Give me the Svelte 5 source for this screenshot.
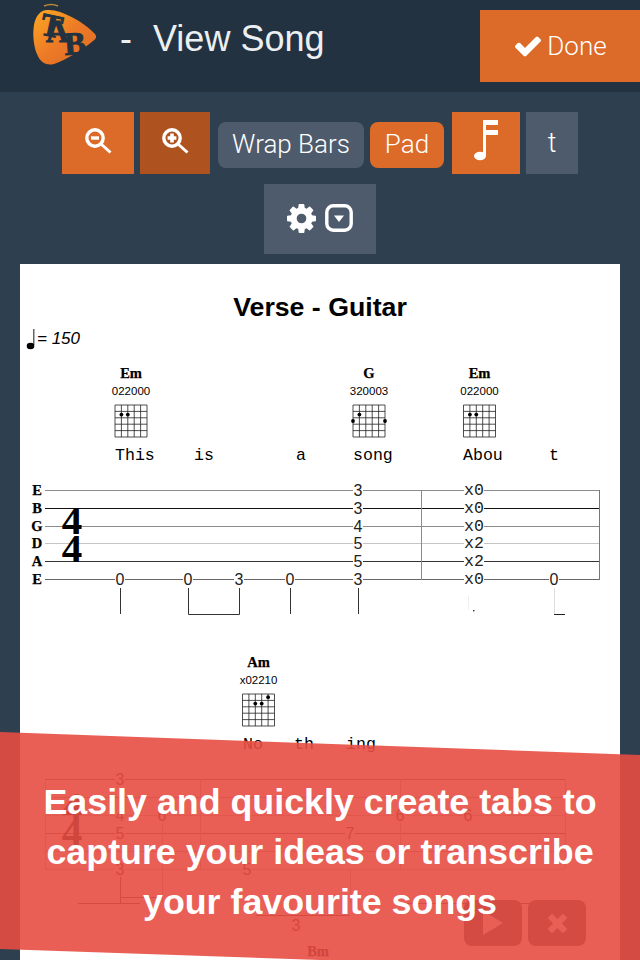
<script>
  const strings = [
    { name: 'E', y: 490, color: '#8c8c8c' },
    { name: 'B', y: 508, color: '#111' },
    { name: 'G', y: 526, color: '#8c8c8c' },
    { name: 'D', y: 543, color: '#c4c4c4' },
    { name: 'A', y: 561, color: '#333' },
    { name: 'E', y: 579, color: '#666' }
  ];

  // fret numbers, bar one then bar two
  const frets = [
    { x: 120, s: 5, t: '0' },
    { x: 188, s: 5, t: '0' },
    { x: 239, s: 5, t: '3' },
    { x: 290, s: 5, t: '0' },
    { x: 358, s: 0, t: '3' },
    { x: 358, s: 1, t: '3' },
    { x: 358, s: 2, t: '4' },
    { x: 358, s: 3, t: '5' },
    { x: 358, s: 4, t: '5' },
    { x: 358, s: 5, t: '3' },
    { x: 554, s: 5, t: '0' }
  ];
  const ghosts = [
    { s: 0, t: 'x0' },
    { s: 1, t: 'x0' },
    { s: 2, t: 'x0' },
    { s: 3, t: 'x2' },
    { s: 4, t: 'x2' },
    { s: 5, t: 'x0' }
  ];

  const chords = [
    { name: 'Em', code: '022000', x: 115, y: 405 },
    { name: 'G', code: '320003', x: 353, y: 405 },
    { name: 'Em', code: '022000', x: 463.5, y: 405 },
    { name: 'Am', code: 'x02210', x: 242.5, y: 694 }
  ];

  const lyrics = [
    { x: 115, y: 460, t: 'This' },
    { x: 194, y: 460, t: 'is' },
    { x: 296, y: 460, t: 'a' },
    { x: 353, y: 460, t: 'song' },
    { x: 463, y: 460, t: 'Abou' },
    { x: 549, y: 460, t: 't' },
    { x: 243, y: 749, t: 'No' },
    { x: 294, y: 749, t: 'th' },
    { x: 346, y: 749, t: 'ing' }
  ];

  const lower = [
    { y: 779, color: '#555' },
    { y: 797, color: '#999' },
    { y: 815, color: '#bbb' },
    { y: 833, color: '#555' },
    { y: 851, color: '#999' },
    { y: 869, color: '#bbb' }
  ];
  const lowerFrets = [
    { x: 120, y: 779, t: '3' },
    { x: 120, y: 815, t: '4' },
    { x: 120, y: 833, t: '5' },
    { x: 120, y: 869, t: '3' },
    { x: 162, y: 815, t: '6' },
    { x: 247, y: 869, t: '5' },
    { x: 350, y: 833, t: '7' },
    { x: 400, y: 815, t: '6' },
    { x: 468, y: 815, t: '6' },
    { x: 296, y: 925, t: '3' }
  ];

  function dots(code) {
    const out = [];
    code.split('').forEach((c, i) => {
      const f = Number(c);
      if (f > 0) out.push({ i, f });
    });
    return out;
  }
</script>

{#snippet diagram(c)}
  <text class="chord-name" x={c.x + 16} y={c.y - 27}>{c.name}</text>
  <text class="chord-code" x={c.x + 16} y={c.y - 10}>{c.code}</text>
  {#each [0, 1, 2, 3, 4, 5] as i}
    <line x1={c.x + i * 6.4} x2={c.x + i * 6.4} y1={c.y} y2={c.y + 32} stroke="#222" stroke-width="0.8" />
    <line x1={c.x} x2={c.x + 32} y1={c.y + i * 6.4} y2={c.y + i * 6.4} stroke="#222" stroke-width="0.8" />
  {/each}
  {#each dots(c.code) as d}
    <circle cx={c.x + d.i * 6.4} cy={c.y + (d.f - 0.5) * 6.4} r="1.9" fill="#000" />
  {/each}
{/snippet}

<div class="screen">
  <header class="topbar">
    <svg class="logo" viewBox="30 0 70 70" width="70" height="70">
      <defs>
        <linearGradient id="pick" x1="0" y1="0" x2="1" y2="1">
          <stop offset="0" stop-color="#fca922" />
          <stop offset="0.5" stop-color="#ec7a26" />
          <stop offset="1" stop-color="#dc6a28" />
        </linearGradient>
      </defs>
      <path d="M44 6 Q51 3 58 6" fill="none" stroke="#b98a35" stroke-width="1.5" />
      <path d="M48 10 C60 9 84 22 94 33 C97 36 97 38 93 41 C82 50 66 60 54 64 C46 66 40 62 37 54 C32 42 32 22 38 15 C41 11 44 10 48 10 Z" fill="url(#pick)" />
      <g class="logo-letters">
        <text transform="translate(39 34) rotate(12)">T</text>
        <text transform="translate(46 42)">A</text>
        <text transform="translate(65 55) rotate(-4)">B</text>
      </g>
    </svg>
    <h1 class="title"><span class="dash">-</span>View Song</h1>
    <button class="done">
      <svg viewBox="0 0 1792 1792" width="30" height="30"><path fill="#fff" d="M1671 566q0 40-28 68l-724 724-136 136q-28 28-68 28t-68-28l-136-136-362-362q-28-28-28-68t28-68l136-136q28-28 68-28t68 28l294 295 656-657q28-28 68-28t68 28l136 136q28 28 28 68z" /></svg>
      Done
    </button>
  </header>

  <div class="toolbar">
    <button class="tool orange zoom-out" aria-label="Zoom out">
      <svg class="lens" viewBox="0 0 27 26" width="27" height="26">
        <circle cx="10" cy="10" r="8.2" fill="none" stroke="#fff" stroke-width="3.4" />
        <path d="M16 16 L25.5 24.5" stroke="#fff" stroke-width="3" />
        <rect x="6" y="8.3" width="8" height="3.4" fill="#fff" />
      </svg>
    </button>
    <button class="tool dark-orange zoom-in" aria-label="Zoom in">
      <svg class="lens" viewBox="0 0 27 26" width="27" height="26">
        <circle cx="10" cy="10" r="8.2" fill="none" stroke="#fff" stroke-width="3.4" />
        <path d="M16 16 L25.5 24.5" stroke="#fff" stroke-width="3" />
        <path d="M5.6 10 H14.4 M10 5.6 V14.4" stroke="#fff" stroke-width="3.6" />
      </svg>
    </button>
    <div class="pills">
      <button class="pill slate">Wrap Bars</button>
      <button class="pill orange">Pad</button>
    </div>
    <button class="tool orange note" aria-label="Notes">
      <svg viewBox="0 0 30 48" width="30" height="48">
        <ellipse cx="9" cy="37" rx="6" ry="4.2" fill="#fff" />
        <rect x="12" y="1" width="3" height="36" fill="#fff" />
        <rect x="12" y="1" width="15" height="5" fill="#fff" />
        <rect x="12" y="11" width="15" height="5" fill="#fff" />
      </svg>
    </button>
    <button class="tool slate letter">t</button>
    <button class="tool slate settings" aria-label="Settings">
      <svg viewBox="128 128 1536 1536" width="29" height="29"><path fill="#fff" d="M1152 896q0-106-75-181t-181-75-181 75-75 181 75 181 181 75 181-75 75-181zm512-109v222q0 12-8 23t-20 13l-185 28q-19 54-39 91 35 50 107 138 10 12 10 25t-9 23q-27 37-99 108t-94 71q-12 0-26-9l-138-108q-44 23-91 38-16 136-29 186-7 28-36 28h-222q-14 0-24.5-8.5t-11.5-21.5l-28-184q-49-16-90-37l-141 107q-10 9-25 9-14 0-25-11-126-114-165-168-7-10-7-23 0-12 8-23 15-21 51-66.5t54-70.5q-27-50-41-99l-183-27q-13-2-21-12.5t-8-23.5v-222q0-12 8-23t19-13l186-28q14-46 39-92-40-57-107-138-10-12-10-24 0-10 9-23 26-36 98.5-107.5t94.5-71.5q13 0 26 10l138 107q44-23 91-38 16-136 29-186 7-28 36-28h222q14 0 24.5 8.5t11.5 21.5l28 184q49 16 90 37l142-107q9-9 24-9 13 0 25 10 129 119 165 170 7 8 7 22 0 12-8 23-15 21-51 66.5t-54 70.5q26 50 41 98l183 28q13 2 21 12.5t8 23.5z" /></svg>
      <svg viewBox="0 0 28 28" width="28" height="28">
        <rect x="1.8" y="1.8" width="24.4" height="24.4" rx="6.5" fill="none" stroke="#fff" stroke-width="3.4" />
        <path d="M9 11.5 H19 L14 18 Z" fill="#fff" />
      </svg>
    </button>
  </div>

  <main class="sheet">
    <h2 class="song-title">Verse - Guitar</h2>
    <div class="tempo">
      <svg viewBox="0 0 12 22" width="12" height="22">
        <ellipse cx="5.5" cy="18" rx="3.8" ry="3.2" fill="#000" />
        <rect x="8.4" y="1" width="0.9" height="16" fill="#000" />
      </svg>
      <span>= 150</span>
    </div>

    <svg class="score" viewBox="20 350 600 610" width="600" height="610">
      {#each chords as c}
        {@render diagram(c)}
      {/each}

      {#each lyrics as l}
        <text class="lyric" x={l.x} y={l.y}>{l.t}</text>
      {/each}

      <!-- first system -->
      {#each strings as s}
        <text class="string-name" x="37" y={s.y + 4.5}>{s.name}</text>
        <line x1="45" x2="600" y1={s.y + 0.5} y2={s.y + 0.5} stroke={s.color} />
      {/each}
      <line x1="421.5" x2="421.5" y1="490" y2="580" stroke="#8c8c8c" />
      <line x1="599.5" x2="599.5" y1="490" y2="580" stroke="#777" />
      <text class="time-sig" x="72" y="534">4</text>
      <text class="time-sig" x="72" y="562">4</text>

      {#each frets as f}
        <rect x={f.x - 5} y={strings[f.s].y - 7} width="10" height="15" fill="#fff" />
        <text class="fret" x={f.x} y={strings[f.s].y + 6}>{f.t}</text>
      {/each}
      {#each ghosts as g}
        <rect x="464" y={strings[g.s].y - 7} width="20" height="15" fill="#fff" />
        <text class="fret mono" x="474" y={strings[g.s].y + 5}>{g.t}</text>
      {/each}

      <path class="stem" d="M120.5 588V614 M188.5 588V614.5H239.5V588 M290.5 588V614 M358.5 588V614" />
      <path d="M468.5 596V610" stroke="#eee" fill="none" />
      <rect x="473" y="610" width="1.4" height="1.4" fill="#333" />
      <path d="M554.5 588V614" stroke="#ddd" fill="none" />
      <path d="M554 614.5H565" stroke="#222" fill="none" />

      <!-- second system, mostly hidden by the banner -->
      {#each lower as l}
        <line x1="45" x2="565" y1={l.y + 0.5} y2={l.y + 0.5} stroke={l.color} />
      {/each}
      <path class="stem faint" d="M45.5 779V869 M200.5 779V869 M400.5 779V869 M565.5 779V869 M162.5 823V903 M350.5 869V903" />
      <path class="stem" d="M120.5 877V903 M78 903.5H140 M120 897.5H162 M256 915.5H350 M400 903.5H533" />
      <text class="time-sig" x="72" y="820">4</text>
      <text class="time-sig" x="72" y="845">4</text>
      {#each lowerFrets as f}
        <rect x={f.x - 5} y={f.y - 8} width="10" height="16" fill="#fff" />
        <text class="fret" x={f.x} y={f.y + 6}>{f.t}</text>
      {/each}
      <text class="chord-name" x="318" y="956">Bm</text>
    </svg>

    <div class="player">
      <button class="round" aria-label="Play">
        <svg viewBox="0 0 20 24" width="20" height="24"><path d="M0 0 L20 12 L0 24 Z" fill="#fff" /></svg>
      </button>
      <button class="round" aria-label="Stop">
        <svg viewBox="0 0 24 24" width="23" height="23"><path d="M4 4 L20 20 M20 4 L4 20" stroke="#fff" stroke-width="6.5" /></svg>
      </button>
    </div>
  </main>

  <aside class="banner">
    <p>Easily and quickly create tabs to<br />capture your ideas or transcribe<br />your favourite songs</p>
  </aside>
</div>

<style>
  :global(body) {
    margin: 0;
    background: #2e4050;
  }

  .screen {
    position: relative;
    width: 640px;
    height: 960px;
    overflow: hidden;
    background: #2e4050;
    font-family: 'Liberation Sans', Arial, sans-serif;
    display: flex;
    flex-direction: column;
  }

  button {
    border: none;
    padding: 0;
    color: #fff;
    font-family: inherit;
    display: flex;
    align-items: center;
    justify-content: center;
  }

  /* Top bar */
  .topbar {
    height: 92px;
    flex: none;
    display: flex;
    align-items: flex-start;
    background: #233240;
  }

  .logo {
    margin-left: 30px;
    flex: none;
  }

  .logo-letters text {
    font-family: 'Liberation Serif', serif;
    font-weight: 700;
    font-size: 32px;
    fill: #233240;
    stroke: #233240;
    stroke-width: 1;
  }

  .title {
    margin: 17px 0 0 20px;
    font-weight: 400;
    font-size: 36px;
    line-height: 44px;
    color: #eceff1;
  }

  .dash {
    margin-right: 21px;
  }

  .done {
    margin: 10px 0 0 auto;
    width: 160px;
    height: 72px;
    gap: 4px;
    background: #dc6a28;
    font-family: Roboto, sans-serif;
    font-weight: 300;
    font-size: 26px;
  }

  /* Toolbar */
  .toolbar {
    display: flex;
    flex-wrap: wrap;
    justify-content: center;
    align-items: flex-start;
    gap: 10px 6px;
    padding: 20px 50px 10px;
  }

  .tool {
    height: 62px;
  }

  .zoom-out {
    width: 72px;
  }

  .zoom-in {
    width: 70px;
  }

  .lens {
    margin-bottom: 4px;
  }

  .note {
    width: 68px;
  }

  .letter {
    width: 52px;
    font-family: Roboto, sans-serif;
    font-weight: 300;
    font-size: 27px;
  }

  .settings {
    width: 112px;
    height: 70px;
    gap: 9px;
    padding-bottom: 2px;
    box-sizing: border-box;
  }

  .pills {
    display: flex;
    gap: 6px;
    margin: 10px 2px 0;
  }

  .pill {
    height: 46px;
    border-radius: 8px;
    font-family: Roboto, sans-serif;
    font-weight: 300;
    font-size: 26px;
    padding-bottom: 3px;
    box-sizing: border-box;
  }

  .pill.slate {
    width: 146px;
  }

  .pill.orange {
    width: 74px;
  }

  .orange {
    background: #dc6a28;
  }

  .dark-orange {
    background: #ae5220;
  }

  .slate {
    background: #4e5b6c;
  }

  /* Sheet */
  .sheet {
    position: relative;
    flex: 1;
    margin: 0 20px;
    background: #fff;
    color: #000;
  }

  .song-title {
    margin: 0;
    padding-top: 27px;
    text-align: center;
    font-size: 26.7px;
    line-height: 32px;
    font-weight: 700;
  }

  .tempo {
    display: flex;
    align-items: flex-end;
    height: 27px;
    padding-left: 5px;
    font-size: 17px;
    font-style: italic;
    line-height: 22px;
  }

  .score {
    display: block;
  }

  .chord-name,
  .string-name {
    font-family: 'Liberation Serif', serif;
    font-weight: 700;
    font-size: 14.5px;
    text-anchor: middle;
    stroke: #000;
    stroke-width: 0.25;
  }

  .chord-code {
    font-size: 11.5px;
    text-anchor: middle;
  }

  .lyric {
    font-family: 'Liberation Mono', monospace;
    font-size: 16.6px;
  }

  .fret {
    font-size: 16px;
    text-anchor: middle;
    fill: #222;
  }

  .fret.mono {
    font-family: 'Liberation Mono', monospace;
    font-size: 16.6px;
  }

  .time-sig {
    font-family: 'Liberation Serif', serif;
    font-weight: 700;
    font-size: 41px;
    text-anchor: middle;
  }

  .stem {
    fill: none;
    stroke: #333;
  }

  .stem.faint {
    stroke: #aaa;
  }

  .player {
    position: absolute;
    right: 34px;
    bottom: 14px;
    display: flex;
    gap: 6px;
  }

  .round {
    width: 58px;
    height: 46px;
    border-radius: 8px;
    background: #2e4050;
  }

  /* Promo banner over the page */
  .banner {
    position: absolute;
    left: 0;
    right: 0;
    bottom: 0;
    height: 228px;
    background: rgba(231, 76, 66, 0.9);
    clip-path: polygon(0 0, 100% 23px, 100% 100%, 320px 100%, 0 217px);
  }

  .banner p {
    margin: 0;
    padding-top: 45px;
    text-align: center;
    color: #fff;
    font-size: 35.8px;
    line-height: 50px;
    font-weight: 700;
  }
</style>
